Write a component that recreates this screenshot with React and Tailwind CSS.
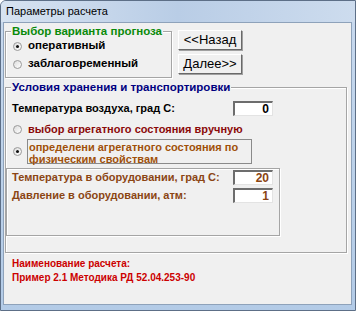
const font = { fontFamily: '"Liberation Sans", Arial, sans-serif' };

const Radio = ({ checked }) => (
  <span className="flex h-[9px] w-[9px] shrink-0 items-center justify-center rounded-full border border-[#9a9a9a] bg-gradient-to-br from-[#dcdcdc] to-[#ffffff]">
    {checked && <span className="h-[3px] w-[3px] rounded-full bg-[#111]" />}
  </span>
);

const Field = ({ value, color }) => (
  <div
    className={`flex h-[15px] w-[40px] items-center justify-end border-t-2 border-l-2 border-r border-b border-t-[#6d6d6d] border-l-[#6d6d6d] border-r-[#e3e3e3] border-b-[#e3e3e3] bg-white pr-[3px] text-[12px] font-bold leading-none ${color}`}
  >
    {value}
  </div>
);

const Legend = ({ children, color }) => (
  <span
    className={`absolute -top-[8px] left-[5px] whitespace-nowrap bg-[#f0f0f0] px-[1px] text-[11.5px] font-bold leading-[14px] ${color}`}
  >
    {children}
  </span>
);

export default function App() {
  return (
    <div
      className="flex h-[311px] w-[356px] flex-col overflow-hidden whitespace-nowrap rounded-tl-[6px] border border-[#5d6f87] bg-gradient-to-b from-[#c9daef] via-[#bdd2ea] to-[#b3cbe7]"
      style={font}
    >
      {/* title bar */}
      <div className="flex h-[21px] shrink-0 items-center bg-gradient-to-r from-[#d7e3f1] via-[#b9cde6] to-[#cddcee] pl-[5px] text-[11px] text-black">
        Параметры расчета
      </div>

      {/* client area */}
      <div className="mb-[5px] ml-[2px] mr-[3px] flex flex-1 flex-col border border-[#8ea2ba] bg-[#f0f0f0]">
        {/* top row */}
        <div className="ml-[1px] mt-[8px] flex items-start">
          <div className="relative h-[47px] w-[167px] border border-[#a5a5a5] shadow-[inset_1px_1px_0_#fff,1px_1px_0_#fff]">
            <Legend color="text-[#0a8a0a]">Выбор варианта прогноза</Legend>
            <div className="mt-[7px] flex h-[14px] items-center gap-[6px] pl-[7px] text-[11.5px] font-bold text-black">
              <Radio checked />
              <span>оперативный</span>
            </div>
            <div className="mt-[4px] flex h-[14px] items-center gap-[6px] pl-[7px] text-[11.5px] font-bold text-black">
              <Radio />
              <span>заблаговременный</span>
            </div>
          </div>
          <div className="-mt-[1px] ml-[6px] flex flex-col gap-[4px]">
            <button className="flex h-[20px] w-[64px] items-center justify-center border border-t-white border-l-white border-r-[#696969] border-b-[#696969] bg-[#f0f0f0] text-[13px] text-black shadow-[1px_1px_0_#a0a0a0]">
              &lt;&lt;Назад
            </button>
            <button className="flex h-[20px] w-[64px] items-center justify-center border border-t-white border-l-white border-r-[#696969] border-b-[#696969] bg-[#f0f0f0] text-[13px] text-black shadow-[1px_1px_0_#a0a0a0]">
              Далее&gt;&gt;
            </button>
          </div>
        </div>

        {/* storage group */}
        <div className="relative ml-[1px] mt-[9px] h-[166px] w-[342px] border border-[#a5a5a5] shadow-[inset_1px_1px_0_#fff,1px_1px_0_#fff]">
          <Legend color="text-[#000080]">Условия хранения и транспортировки</Legend>

          <div className="mt-[13px] flex h-[15px] items-center">
            <span className="w-[227px] pl-[6px] text-[11px] font-bold text-black">
              Температура воздуха, град С:
            </span>
            <Field value="0" color="text-black" />
          </div>

          <div className="mt-[6px] flex h-[14px] items-center gap-[6px] pl-[7px] text-[11px] font-bold text-[#8b0a0a]">
            <Radio />
            <span>выбор агрегатного состояния вручную</span>
          </div>

          <div className="mt-[3px] flex items-center gap-[5px] pl-[7px]">
            <Radio checked />
            <div className="h-[25px] w-[225px] border border-[#8a8a8a] pl-[1px] pt-[1px] text-[11px] font-bold leading-[12px] text-[#a0500a]">
              определени агрегатного состояния по
              <br />
              физическим свойствам
            </div>
          </div>

          <div className="mt-[4px] h-[68px] w-[274px] border border-[#a5a5a5] shadow-[inset_1px_1px_0_#fff,1px_1px_0_#fff]">
            <div className="mt-[1px] flex h-[15px] items-center">
              <span className="w-[226px] pl-[5px] text-[11px] font-bold text-[#8b4513]">
                Температура в оборудовании, град С:
              </span>
              <Field value="20" color="text-[#8b4513]" />
            </div>
            <div className="mt-[3px] flex h-[15px] items-center">
              <span className="w-[226px] pl-[5px] text-[11px] font-bold text-[#8b4513]">
                Давление в оборудовании, атм:
              </span>
              <Field value="1" color="text-[#8b4513]" />
            </div>
          </div>
        </div>

        {/* calculation name */}
        <div className="mt-[4px] pl-[8px] text-[10px] font-bold leading-[14px] text-[#cc0000]">
          <div>Наименование расчета:</div>
          <div>Пример 2.1 Методика РД 52.04.253-90</div>
        </div>
      </div>
    </div>
  );
}
